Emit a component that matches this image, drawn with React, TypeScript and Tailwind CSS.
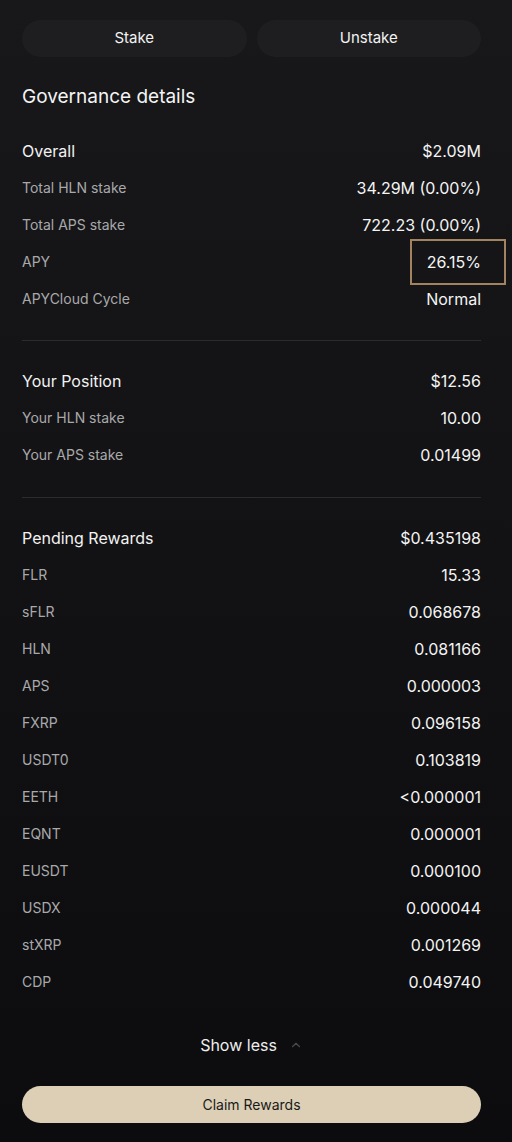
import { ChevronUp } from 'lucide-react';

type Row = { label: string; value: string; main?: boolean; highlight?: boolean };

const overall: Row[] = [
  { label: 'Overall', value: '$2.09M', main: true },
  { label: 'Total HLN stake', value: '34.29M (0.00%)' },
  { label: 'Total APS stake', value: '722.23 (0.00%)' },
  { label: 'APY', value: '26.15%', highlight: true },
  { label: 'APYCloud Cycle', value: 'Normal' },
];

const position: Row[] = [
  { label: 'Your Position', value: '$12.56', main: true },
  { label: 'Your HLN stake', value: '10.00' },
  { label: 'Your APS stake', value: '0.01499' },
];

const rewards: Row[] = [
  { label: 'Pending Rewards', value: '$0.435198', main: true },
  { label: 'FLR', value: '15.33' },
  { label: 'sFLR', value: '0.068678' },
  { label: 'HLN', value: '0.081166' },
  { label: 'APS', value: '0.000003' },
  { label: 'FXRP', value: '0.096158' },
  { label: 'USDT0', value: '0.103819' },
  { label: 'EETH', value: '<0.000001' },
  { label: 'EQNT', value: '0.000001' },
  { label: 'EUSDT', value: '0.000100' },
  { label: 'USDX', value: '0.000044' },
  { label: 'stXRP', value: '0.001269' },
  { label: 'CDP', value: '0.049740' },
];

function DetailRow({ row }: { row: Row }) {
  return (
    <div className="flex h-[37px] items-center justify-between">
      <span
        className={
          row.main
            ? 'text-[16px] text-[#f2f2f2]'
            : 'text-[14px] text-[#a9a9ab]'
        }
      >
        {row.label}
      </span>
      <span className="relative text-[16px] text-[#f4f4f4]">
        {row.value}
        {row.highlight && (
          <span className="absolute -top-[11px] -bottom-[11px] -left-[17px] -right-[25px] border-2 border-[#a3835f]" />
        )}
      </span>
    </div>
  );
}

function Section({ rows }: { rows: Row[] }) {
  return (
    <div>
      {rows.map((row) => (
        <DetailRow key={row.label} row={row} />
      ))}
    </div>
  );
}

export default function App() {
  return (
    <div
      className="min-h-[1142px] w-[512px] bg-gradient-to-b from-[#18181a] to-[#0c0c0f] pl-[22px] pr-[31px] pt-[20px]"
      style={{ fontFamily: 'Inter, "Noto Sans", sans-serif' }}
    >
      <div className="flex gap-[10px]">
        <button className="h-[37px] flex-1 rounded-full bg-[#1e1e20] text-[15px] text-[#f2f2f2]">
          Stake
        </button>
        <button className="h-[37px] flex-1 rounded-full bg-[#1e1e20] text-[15px] text-[#f2f2f2]">
          Unstake
        </button>
      </div>

      <h2 className="mt-[26px] h-[28px] text-[19px] leading-[28px] text-[#f4f4f4]">
        Governance details
      </h2>

      <div className="mt-[21px]">
        <Section rows={overall} />
      </div>

      <div className="mt-[23px] mb-[21px] h-px bg-[#2c2c2e]" />

      <Section rows={position} />

      <div className="mt-[24px] mb-[21px] h-px bg-[#2c2c2e]" />

      <Section rows={rewards} />

      <div className="mt-[33px] flex items-center justify-center gap-[12px]">
        <span className="text-[16px] text-[#eeeeee]">Show less</span>
        <ChevronUp size={14} className="text-[#4a4a4c]" strokeWidth={2} />
      </div>

      <button className="mt-[29px] h-[37px] w-full rounded-full bg-[#dccfb5] text-[14px] text-[#1a1a1a]">
        Claim Rewards
      </button>
    </div>
  );
}
